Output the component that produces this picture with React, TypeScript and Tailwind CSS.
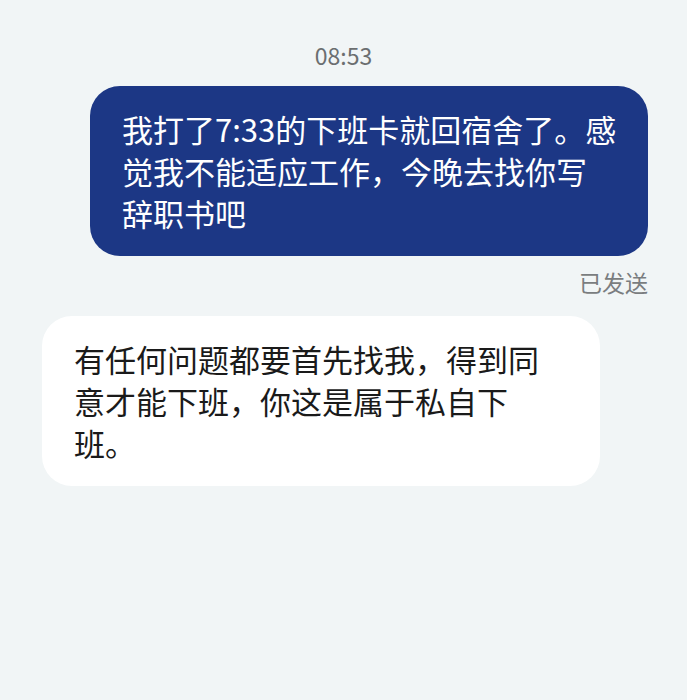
export default function App() {
  return (
    <div
      className="min-h-screen w-full bg-[#f1f5f6] flex flex-col"
      style={{ fontFamily: '"Noto Sans CJK SC", "Noto Sans", sans-serif' }}
    >
      <div className="pt-[39px] text-center text-[23px] leading-[32px] text-[#6b6e70]">08:53</div>

      <div className="mt-[15px] flex justify-end pr-[39px]">
        <div className="w-[558px] rounded-[30px] bg-[#1c3785] pl-[32px] pr-[24px] pt-[22px] pb-[22px] text-[31px] leading-[42px] text-white">
          <span className="whitespace-nowrap">我打了7:33的下班卡就回宿舍了。感</span>
          <br />
          <span className="whitespace-nowrap">觉我不能适应工作，今晚去找你写</span>
          <br />
          辞职书吧
        </div>
      </div>

      <div className="mt-[11px] pr-[39px] text-right text-[23px] leading-[30px] text-[#7a7d80]">已发送</div>

      <div className="mt-[19px] flex pl-[42px]">
        <div className="w-[558px] rounded-[30px] bg-white pl-[32px] pr-[24px] pt-[22px] pb-[22px] text-[31px] leading-[42px] text-[#1a1a1a]">
          <span className="whitespace-nowrap">有任何问题都要首先找我，得到同</span>
          <br />
          <span className="whitespace-nowrap">意才能下班，你这是属于私自下</span>
          <br />
          班。
        </div>
      </div>
    </div>
  )
}
